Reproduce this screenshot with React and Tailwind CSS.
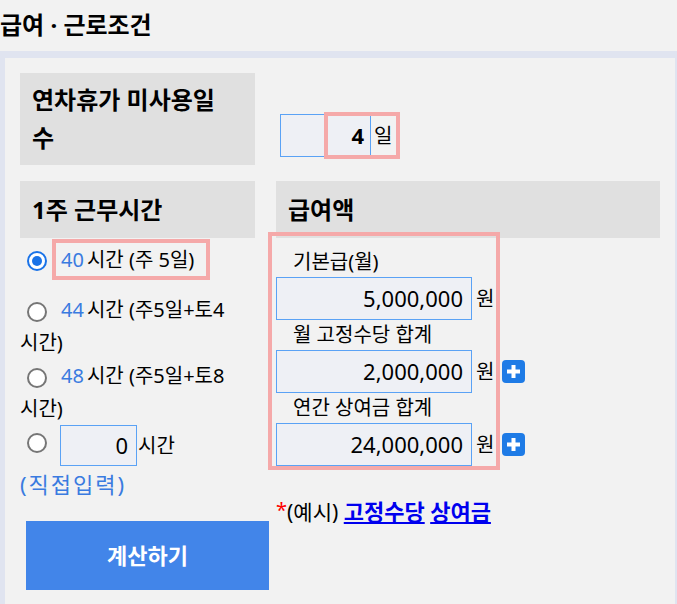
import React from "react";

const ko = { fontFamily: '"Noto Sans", "Noto Sans CJK KR", sans-serif' };

function PlusButton() {
  return (
    <div className="ml-[8px] w-[23px] h-[23px] shrink-0 rounded-[4px] bg-[#1e7be6] flex items-center justify-center">
      <svg width="15" height="15" viewBox="0 0 15 15">
        <rect x="5.5" y="1" width="4" height="13" fill="#fff" />
        <rect x="1" y="5.5" width="13" height="4" fill="#fff" />
      </svg>
    </div>
  );
}

function Radio({ checked }) {
  return (
    <span
      className={
        "inline-block align-middle w-[20px] h-[20px] rounded-full bg-white " +
        (checked ? "border-[2px] border-[#1a73e8] p-[3px]" : "border-[2px] border-[#767676]")
      }
    >
      {checked && <span className="block w-full h-full rounded-full bg-[#1a73e8]" />}
    </span>
  );
}

function MoneyRow({ label, value, plus }) {
  return (
    <>
      <div className="h-[30px] leading-[30px] pl-[17px] text-[20px]">{label}</div>
      <div className="flex items-center">
        <div className="w-[196px] h-[43px] shrink-0 border border-[#5aa2f5] bg-[#eef0f5] flex items-center justify-end pr-[8px] text-[22px]">
          {value}
        </div>
        <span className="ml-[4px] text-[20px] shrink-0">원</span>
        {plus && <PlusButton />}
      </div>
    </>
  );
}

export default function App() {
  return (
    <div className="w-[677px] h-[604px] overflow-hidden bg-[#f2f2f2] text-black flex flex-col" style={ko}>
      <div className="h-[51px] shrink-0 flex items-center pb-[2px] text-[24px] font-bold">급여 · 근로조건</div>
      <div className="flex-1 bg-[#e0e4f0] pt-[7px] pl-[5px] pr-[2px] flex">
        <div className="flex-1 bg-[#f2f2f2] pt-[15px] pl-[15px] flex gap-[21px]">
          {/* left column */}
          <div className="w-[235px] shrink-0 flex flex-col">
            <div className="h-[92px] bg-[#e0e0e0] pl-[12px] pr-[14px] pt-[8px] text-[24px] font-bold leading-[38px] break-keep">
              연차휴가 미사용일 수
            </div>
            <div className="mt-[16px] h-[57px] bg-[#e0e0e0] pl-[12px] flex items-center text-[24px] font-bold">
              1주 근무시간
            </div>

            <div className="mt-[1px] h-[41px] flex items-center text-[20px]">
              <span className="ml-[7px]"><Radio checked /></span>
              <span className="ml-[5px] h-[41px] border-[4px] border-[#f5a9a9] pl-[5px] pr-[12px] flex items-center whitespace-nowrap">
                <span className="text-[#3a7be0]">40</span>
                <span className="ml-[3px]">시간 (주 5일)</span>
              </span>
            </div>

            <div className="mt-[13px] text-[20px] leading-[33px] break-keep">
              <span className="ml-[7px] mr-[14px]"><Radio /></span>
              <span className="text-[#3a7be0] mr-[3px]">44</span>시간 (주5일+토4 시간)
            </div>
            <div className="text-[20px] leading-[33px] break-keep">
              <span className="ml-[7px] mr-[14px]"><Radio /></span>
              <span className="text-[#3a7be0] mr-[3px]">48</span>시간 (주5일+토8 시간)
            </div>
            <div className="flex items-center text-[20px] h-[41px]">
              <span className="ml-[7px] -mt-[8px]"><Radio /></span>
              <span className="ml-[13px] w-[77px] h-[41px] border border-[#5aa2f5] bg-[#eef0f5] flex items-center justify-end pr-[8px] text-[22px]">
                0
              </span>
              <span className="ml-[1px]">시간</span>
            </div>
            <div className="mt-[2px] text-[22px] tracking-[2px] leading-[33px] text-[#3a7be0]">(직접입력)</div>

            <button className="mt-[20px] ml-[6px] w-[243px] h-[69px] bg-[#4285e9] text-white text-[22px] font-bold">
              계산하기
            </button>
          </div>

          {/* right column */}
          <div className="w-[384px] shrink-0 flex flex-col">
            <div className="h-[92px] pt-[41px] pl-[4px]">
              <div className="relative flex items-center">
                <div className="w-[91px] h-[43px] border border-[#5aa2f5] bg-[#eef0f5] flex items-center justify-end pr-[6px] text-[22px] font-bold">
                  4
                </div>
                <span className="ml-[3px] text-[20px]">일</span>
                <div className="absolute left-[44px] -top-[2px] w-[76px] h-[47px] border-[4px] border-[#f5a9a9]" />
              </div>
            </div>
            <div className="mt-[16px] h-[57px] bg-[#e0e0e0] pl-[12px] flex items-center text-[24px] font-bold">
              급여액
            </div>
            <div className="-mt-[6px] -ml-[8px] w-[232px] h-[238px] border-[4px] border-[#f5a9a9] pl-[4px] pt-[11px] flex flex-col">
              <MoneyRow label="기본급(월)" value="5,000,000" />
              <MoneyRow label="월 고정수당 합계" value="2,000,000" plus />
              <MoneyRow label="연간 상여금 합계" value="24,000,000" plus />
            </div>
            <div className="mt-[25px] text-[21px]">
              <span className="text-[#ff0000] align-top text-[20px]">*</span>(예시){" "}
              <a href="#" className="text-[#0000ee] underline font-bold text-[22px]">고정수당</a>{" "}
              <a href="#" className="text-[#0000ee] underline font-bold text-[22px]">상여금</a>
            </div>
          </div>
        </div>
      </div>
    </div>
  );
}
